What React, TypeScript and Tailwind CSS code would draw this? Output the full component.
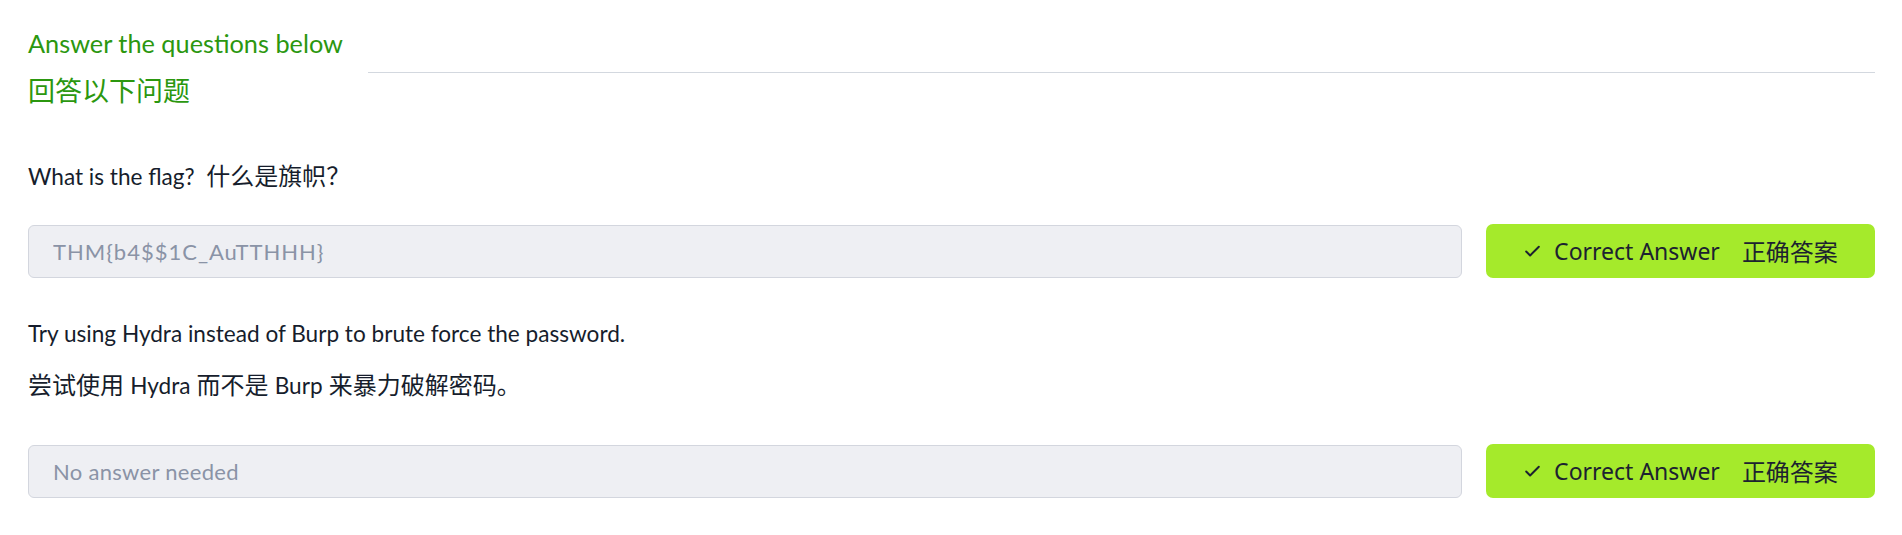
import { Check } from 'lucide-react';

const sans = "font-['Lato','Noto_Sans_CJK_SC',sans-serif]";

function AnswerRow({ value, wide }: { value: string; wide?: boolean }) {
  return (
    <div className="flex items-center gap-[24px]">
      <input
        readOnly
        value={value}
        className={`flex-1 h-[53px] rounded-[6px] border border-[#d3d6de] bg-[#eeeff3] px-[24px] text-[22px] text-[#8a93a6] outline-none ${
          wide ? 'tracking-[1px]' : 'tracking-[0.3px]'
        } ${sans}`}
      />
      <button className="w-[389px] h-[54px] rounded-[7px] bg-[#a5ea2b] flex items-center justify-center text-[#1c2230] font-['Noto_Sans','Noto_Sans_CJK_SC',sans-serif]">
        <Check size={19} strokeWidth={2.5} />
        <span className="ml-[12px] text-[23px]">Correct Answer</span>
        <span className="ml-[22px] text-[24px] font-['Noto_Sans_CJK_SC',sans-serif]">正确答案</span>
      </button>
    </div>
  );
}

export default function App() {
  return (
    <div className={`min-h-screen bg-white pl-[28px] pr-[27px] pt-[25px] ${sans}`}>
      {/* Heading */}
      <div className="flex items-start">
        <div className="text-[#2b970f] text-[25.3px]">
          <p className="leading-[36px]">Answer the questions below</p>
          <p className="mt-[12px] leading-[36px] text-[27px]">回答以下问题</p>
        </div>
        <div className="flex-1 h-px bg-[#d3d8df] ml-[25px] mt-[47px]" />
      </div>

      {/* Question 1 */}
      <p className="mt-[51px] leading-[32px] text-[22.6px] text-[#161d2c]">
        What is the flag?&nbsp; <span className="text-[24px]">什么是旗帜？</span>
      </p>
      <div className="mt-[31px]">
        <AnswerRow value="THM{b4$$1C_AuTTHHH}" wide />
      </div>

      {/* Question 2 */}
      <p className="mt-[40px] leading-[32px] text-[22.6px] text-[#161d2c]">
        Try using Hydra instead of Burp to brute force the password.
      </p>
      <p className="mt-[19px] leading-[32px] text-[24px] text-[#161d2c]">
        尝试使用 <span className="text-[22.6px]">Hydra</span> 而不是 <span className="text-[22.6px]">Burp</span> 来暴力破解密码。
      </p>
      <div className="mt-[42px]">
        <AnswerRow value="No answer needed" />
      </div>
    </div>
  );
}
